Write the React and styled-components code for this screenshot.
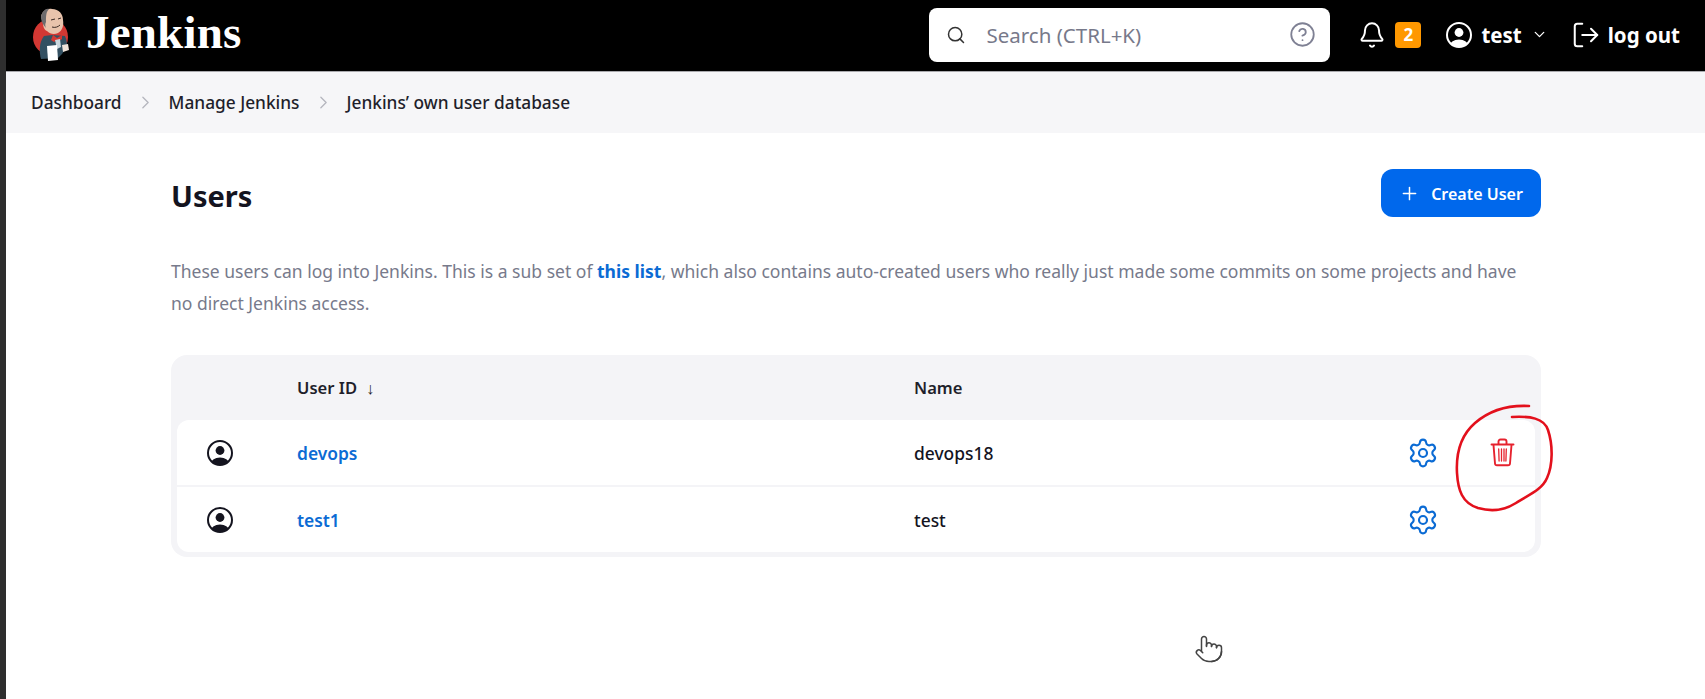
import React from "react";
import styled, { createGlobalStyle } from "styled-components";
import { Search, CircleHelp, Bell, ChevronDown, ChevronRight, LogOut, Plus, Settings, Pointer } from "lucide-react";

const Global = createGlobalStyle`
  html, body { margin: 0; padding: 0; background: #fff; overflow: hidden; }
  body { font-family: "Noto Sans", "Open Sans", "Liberation Sans", sans-serif; color: #14141f; }
  a { text-decoration: none; }
`;

const Page = styled.div`
  position: relative;
  width: 1705px;
  height: 699px;
  box-sizing: border-box;
  border-left: 6px solid #2e2e2e;
  overflow: hidden;
`;

const Header = styled.header`
  height: 72px;
  box-sizing: border-box;
  background: #000;
  border-bottom: 1px solid #a9a9ad;
  margin-left: -6px;
  padding: 0 25px 2px 30px;
  display: flex;
  align-items: center;
  color: #fff;
`;

const Brand = styled.div`
  display: flex;
  align-items: center;
  gap: 12px;
`;

const Wordmark = styled.span`
  font-family: "Liberation Serif", serif;
  font-weight: 700;
  font-size: 47px;
  letter-spacing: 0.2px;
  line-height: 1;
  margin-bottom: 4px;
`;

const SearchBox = styled.div`
  margin-left: auto;
  width: 401px;
  height: 54px;
  box-sizing: border-box;
  background: #fff;
  border-radius: 8px;
  display: flex;
  align-items: center;
  padding: 0 14px 0 17px;
  color: #333;
`;

const Placeholder = styled.span`
  margin-left: 20px;
  flex: 1;
  font-size: 20.5px;
  color: #77798a;
`;

const HeaderActions = styled.div`
  display: flex;
  align-items: center;
  margin-left: 28px;
`;

const Badge = styled.span`
  width: 26px;
  height: 26px;
  margin-left: 9px;
  border-radius: 4px;
  background: #ff9800;
  color: #fff;
  font-weight: 700;
  font-size: 17px;
  display: flex;
  align-items: center;
  justify-content: center;
`;

const UserMenu = styled.div`
  display: flex;
  align-items: center;
  margin-left: 25px;
  gap: 9px;
`;

const HeaderLabel = styled.span`
  font-weight: 700;
  font-size: 20.5px;
  color: #fff;
`;

const LogoutLink = styled.div`
  display: flex;
  align-items: center;
  gap: 7px;
  margin-left: 23px;
`;

const Breadcrumbs = styled.nav`
  height: 61px;
  background: #f6f6f8;
  padding-left: 25px;
  display: flex;
  align-items: center;
  font-size: 17.3px;
  font-weight: 500;
  color: #1f1f2b;
`;

const Crumb = styled.span`
  white-space: nowrap;
`;

const Separator = styled.span`
  display: flex;
  width: 47px;
  justify-content: center;
  color: #b4b5bd;
`;

const Main = styled.main`
  padding: 36px 164px 0 165px;
`;

const TitleRow = styled.div`
  display: flex;
  align-items: center;
  justify-content: space-between;
`;

const Title = styled.h1`
  margin: 0;
  padding-top: 6px;
  font-size: 29px;
  font-weight: 700;
  line-height: 42px;
  color: #14141f;
`;

const CreateButton = styled.button`
  width: 160px;
  height: 48px;
  border: 0;
  border-radius: 12px;
  padding-top: 2px;
  background: #0068ec;
  color: #fff;
  font: 600 16px "Noto Sans", sans-serif;
  display: flex;
  align-items: center;
  justify-content: center;
  gap: 11px;
`;

const Description = styled.p`
  margin: 38px 0 0;
  font-size: 17.52px;
  line-height: 32px;
  color: #777a8b;
`;

const StrongLink = styled.a`
  color: #0b6bd4;
  font-weight: 700;
`;

const Table = styled.div`
  margin-top: 36px;
  background: #f4f4f7;
  border-radius: 16px;
  padding: 0 6px 5px;
`;

const Grid = styled.div`
  display: grid;
  grid-template-columns: 120px 617px 1fr 92px 66px;
  align-items: center;
`;

const HeadRow = styled(Grid)`
  height: 65px;
  font-size: 16.6px;
  font-weight: 600;
  color: #1f1f2b;
`;

const SortArrow = styled.span`
  margin-left: 9px;
  font-weight: 400;
`;

const Row = styled(Grid)`
  height: 65px;
  background: #fff;
  margin-bottom: 2px;
  border-radius: ${(p) => p.$radius};
  font-size: 17.4px;
  font-weight: 500;
  &:last-child { margin-bottom: 0; }
`;

const IconCell = styled.div`
  display: flex;
  justify-content: center;
  padding-right: 34px;
`;

const UserLink = styled.a`
  color: #0b6bd4;
  font-weight: 600;
`;

const ActionCell = styled.div`
  display: flex;
  justify-content: center;
  color: ${(p) => p.$color || "#0b6bd4"};
`;

const Annotation = styled.svg`
  position: absolute;
  left: -6px;
  top: 0;
  pointer-events: none;
`;

const Cursor = styled.div`
  position: absolute;
  left: 1188px;
  top: 634px;
  color: #444;
`;

const Logo = () => (
  <svg width="44" height="56" viewBox="30 6 44 56">
    <ellipse cx="50.5" cy="36" rx="17.5" ry="18" fill="#d33833" />
    <path d="M41 58c-2-7-2-17 3-23l8-1 13 1c2 4 2 8 2 11l-5 7-4 4z" fill="#335061" />
    <path d="M53 34l4 3 5-3v4l-3 2-2-1-3 2-3-2z" fill="#d33833" />
    <path d="M55 39l5-1 1 8-4 2z" fill="#c9d6dd" />
    <path d="M41 16c1-6 6-9 11-8 7 0 11 5 11 11 1 6-1 11-5 13-4 2-8 1-11-2-3-1-4-5-4-8z" fill="#e8c3ac" />
    <path d="M41 16c1-6 5-9 8-8-3 3-3 7-3 13-1 2-1 4 0 6-3-3-5-7-5-11z" fill="#6d6b6d" />
    <path d="M51 19l4-1M58 18l3-1M52 26c3 1 6 0 8-2" stroke="#3a2a25" strokeWidth="1" fill="none" />
    <path d="M47 45l10-1 1 15-10 1z" fill="#fff" />
    <path d="M62 44l6-1 1 6-6 2z" fill="#f1e4da" />
  </svg>
);

const PersonCircle = ({ size, color }) => (
  <svg width={size} height={size} viewBox="0 0 26 26">
    <defs>
      <clipPath id={`person-${color.slice(1)}`}>
        <circle cx="13" cy="13" r="12" />
      </clipPath>
    </defs>
    <circle cx="13" cy="13" r="12" fill="none" stroke={color} strokeWidth="2" />
    <circle cx="13" cy="10.5" r="4.4" fill={color} />
    <ellipse cx="13" cy="24" rx="9.5" ry="6.5" fill={color} clipPath={`url(#person-${color.slice(1)})`} />
  </svg>
);

const TrashCan = () => (
  <svg width="25" height="29" viewBox="0 0 25 29" fill="none" stroke="currentColor" strokeWidth="1.9" strokeLinecap="round" strokeLinejoin="round">
    <path d="M1.5 6.5h22" />
    <path d="M8.5 6V3.5c0-1 .8-2 2-2h4c1.200 0 2 1 2 2V6" />
    <path d="M3.5 7l1.500 18.500c.1 1 .8 1.800 2 1.800h11c1.200 0 1.900-.8 2-1.800L21.500 7" />
    <path d="M8.700 11l.4 12M11.500 11v12M14 11v12M16.300 11l-.4 12" strokeWidth="1.300" />
  </svg>
);

const users = [
  { id: "devops", name: "devops18", removable: true, radius: "12px 12px 0 0" },
  { id: "test1", name: "test", removable: false, radius: "0 0 12px 12px" },
];

export default function App() {
  return (
    <Page>
      <Global />
      <Header>
        <Brand>
          <Logo />
          <Wordmark>Jenkins</Wordmark>
        </Brand>
        <SearchBox>
          <Search size={20} strokeWidth={1.8} />
          <Placeholder>Search (CTRL+K)</Placeholder>
          <CircleHelp size={27} strokeWidth={1.6} color="#7f8194" />
        </SearchBox>
        <HeaderActions>
          <Bell size={28} strokeWidth={1.7} />
          <Badge>2</Badge>
          <UserMenu>
            <PersonCircle size={26} color="#ffffff" />
            <HeaderLabel>test</HeaderLabel>
            <ChevronDown size={17} strokeWidth={1.8} />
          </UserMenu>
          <LogoutLink>
            <LogOut size={30} strokeWidth={1.6} />
            <HeaderLabel>log out</HeaderLabel>
          </LogoutLink>
        </HeaderActions>
      </Header>
      <Breadcrumbs>
        <Crumb>Dashboard</Crumb>
        <Separator><ChevronRight size={21} strokeWidth={1.5} /></Separator>
        <Crumb>Manage Jenkins</Crumb>
        <Separator><ChevronRight size={21} strokeWidth={1.5} /></Separator>
        <Crumb>Jenkins’ own user database</Crumb>
      </Breadcrumbs>
      <Main>
        <TitleRow>
          <Title>Users</Title>
          <CreateButton><Plus size={21} strokeWidth={1.7} />Create User</CreateButton>
        </TitleRow>
        <Description>
          These users can log into Jenkins. This is a sub set of <StrongLink>this list</StrongLink>, which also contains auto-created users who really just made some commits on some projects and have no direct Jenkins access.
        </Description>
        <Table>
          <HeadRow>
            <span />
            <span>User ID<SortArrow>↓</SortArrow></span>
            <span>Name</span>
          </HeadRow>
          {users.map((u) => (
            <Row key={u.id} $radius={u.radius}>
              <IconCell><PersonCircle size={26} color="#14141f" /></IconCell>
              <UserLink>{u.id}</UserLink>
              <span>{u.name}</span>
              <ActionCell><Settings size={32} strokeWidth={1.6} /></ActionCell>
              <ActionCell $color="#e6222e">{u.removable && <TrashCan />}</ActionCell>
            </Row>
          ))}
        </Table>
      </Main>
      <Annotation width="1705" height="699" viewBox="0 0 1705 699" fill="none">
        <path d="M1529 406C1510 405 1490 410 1475 423C1460 436 1456 455 1457 473C1458 490 1462 503 1478 508C1492 512 1505 510 1516 503C1528 495 1542 490 1547 478C1553 465 1553 445 1548 430C1544 418 1530 416 1512 417" stroke="#e3101c" strokeWidth="2.6" strokeLinecap="round" />
      </Annotation>
      <Cursor><Pointer size={30} strokeWidth={1.2} /></Cursor>
    </Page>
  );
}
